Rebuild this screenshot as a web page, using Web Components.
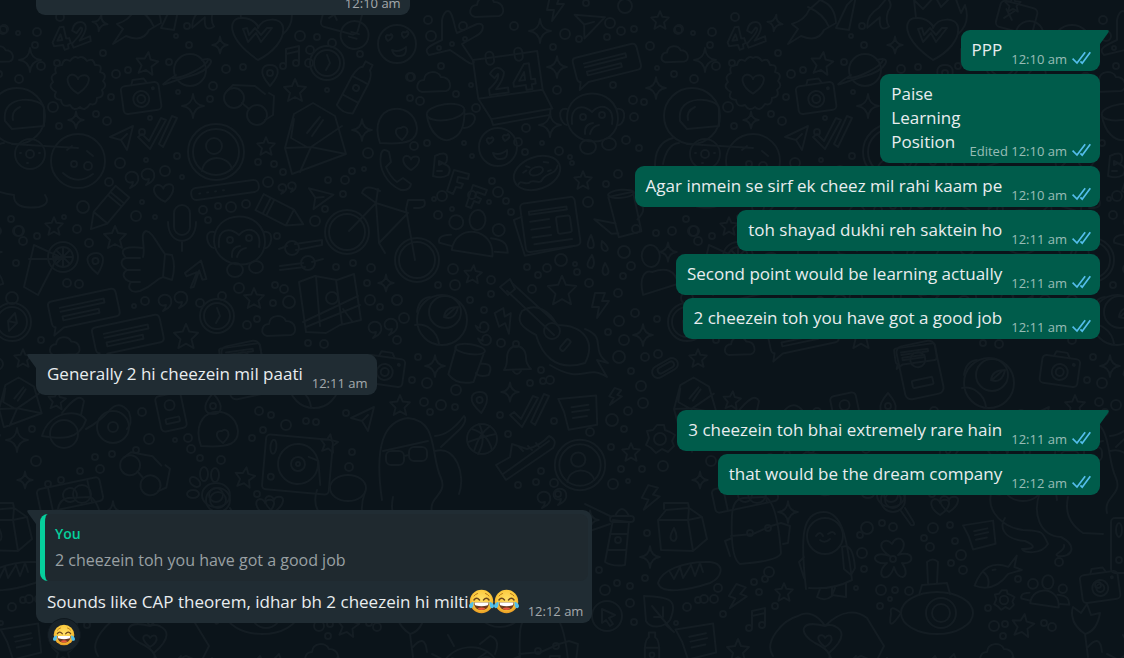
<!DOCTYPE html>
<html lang="en">
<head>
<meta charset="utf-8">
<meta name="viewport" content="width=device-width, initial-scale=1">
<title>Chat</title>
<style>
  html, body { height: 100%; margin: 0; }
  body { overflow: hidden; background: #0b141a; font-family: "Open Sans", "Noto Sans", sans-serif; color: #e9edef; }
</style>
</head>
<body>
<chat-thread>
  <chat-group>
    <chat-message side="in" time="12:10 am">Par kher iski to koi limit hi nahi h tbh</chat-message>
  </chat-group>
  <chat-group>
    <chat-message side="out" tail time="12:10 am">PPP</chat-message>
    <chat-message side="out" edited time="12:10 am">Paise<br>Learning<br>Position</chat-message>
    <chat-message side="out" time="12:10 am">Agar inmein se sirf ek cheez mil rahi kaam pe</chat-message>
    <chat-message side="out" time="12:11 am">toh shayad dukhi reh saktein ho</chat-message>
    <chat-message side="out" time="12:11 am">Second point would be learning actually</chat-message>
    <chat-message side="out" time="12:11 am">2 cheezein toh you have got a good job</chat-message>
  </chat-group>
  <chat-group>
    <chat-message side="in" tail time="12:11 am">Generally 2 hi cheezein mil paati</chat-message>
  </chat-group>
  <chat-group>
    <chat-message side="out" tail time="12:11 am">3 cheezein toh bhai extremely rare hain</chat-message>
    <chat-message side="out" time="12:12 am">that would be the dream company</chat-message>
  </chat-group>
  <chat-group>
    <chat-message side="in" tail time="12:12 am">
      <quoted-message slot="quote" author="You">2 cheezein toh you have got a good job</quoted-message>Sounds like CAP theorem, idhar bh 2 cheezein hi milti<joy-emoji></joy-emoji><joy-emoji></joy-emoji>
      <joy-emoji slot="reaction"></joy-emoji>
    </chat-message>
  </chat-group>
</chat-thread>

<script>
const define = (name, html, setup) => customElements.define(name, class extends HTMLElement {
  connectedCallback() {
    if (this.shadowRoot) return;
    const root = this.attachShadow({ mode: 'open' });
    root.innerHTML = html;
    if (setup) setup(this, root);
  }
});

/* Wallpaper: line doodles, centred on 0,0, repeated every 675px */
const shapes = {
  star: '<path d="M0-11 3-4 11-3 5 3 7 11 0 7-7 11-5 3-11-3-3-4Z"/>',
  spark: '<path d="M0-12Q1-1 11 0 1 1 0 12-1 1-11 0-1-1 0-12Z"/>',
  heart: '<path d="M0 8C-10 2-11-7-5-8-2-8 0-5 0-4 1-8 10-9 9-3 8 3 3 6 0 8Z"/>',
  bolt: '<path d="M-5-12H5L2-4H9L-3 13-1 2H-8Z"/>',
  cloud: '<path d="M-12 9C-20 7-17-3-10-3-9-13 4-13 7-6 17-6 19 6 12 8Z"/>',
  check: '<path d="M-20 3-16 0-9 7 3-16 8-14-8 15ZM1 10 14-18 19-16 5 13Z"/>',
  plane: '<path d="M-4-31C1-31 2-15 5-9L25-18C34-20 32-10 24-6L10 2 22 20C20 25 15 19-2 8L-23 13C-29 7-23 4-10-2L-10-22Q-8-31-4-31Z"/><circle cx="-13" cy="6" r="2"/><circle cx="0" cy="2" r="2"/><circle cx="13" cy="-3" r="2"/>',
  planet: '<circle r="16"/><path d="M-14 5C-40 22-22 12 0 6S28-15 12-10"/><path d="M-18 8C-8 9 16-3 18-10"/>',
  badge: '<path d="M0-26Q5-29 9-23 15-27 17-19 25-20 22-12 30-10 25-3 30 2 24 6 27 13 19 14 19 22 12 20 7 28 2 23-4 28-8 21-16 24-17 16-26 15-22 8-31 3-25-2-29-8-22-11-25-19-16-19-14-27-8-23-4-29 0-26Z"/>',
  camera: '<rect x="-19" y="-13" width="38" height="28" rx="4"/><path d="M-8-13-6-18H5L8-13"/><circle cy="2" r="8"/><circle cy="2" r="4"/><circle cx="13" cy="-7" r="1"/>',
  glasses: '<circle cx="-13" cy="-7" r="10"/><circle cx="10" cy="10" r="10"/><path d="M-5-2 2 4M-20-14-14-20 8-19 18-11M18 15 26 10 27-9 22-12"/>',
  envelope: '<path d="M-30 10-23 36 31 16 20-22-2-35-21-24ZM-30 10-4 9 27-12M-4 9-15 34M-4 9 31 16M-21-19-24 0-8 9M-8-5 5-21M-3-2 8-18"/>',
  avatar: '<circle r="28"/><circle r="23"/><circle cx="-2" cy="-6" r="8"/><path d="M-14 19C-12 2 12 2 16 17"/>',
  face: '<circle r="19"/><path d="M-9-3q-4-4-1-6 4 1 4-1 4 3-3 7ZM7-6q-4-4-1-6 4 1 4-1 4 3-3 7ZM-5 6Q2 9 9 3 10 12 3 12-3 13-5 6Z"/>',
  monkey: '<path d="M-25 2C-26-32 26-32 26 2 25 33-22 31-25 2Z"/><path d="M-25-8C-37-10-31 8-25 8M25-8C37-10 32 10 25 8M-20 7C-22-12-9-13 0-5 9-15 23-10 20 7M-7 17Q-8 7 1 6M-2 17Q0 9 7 8"/><circle cx="-9" cy="0" r="3"/><circle cx="10" cy="-2" r="3"/><ellipse cx="-4" cy="30" rx="8" ry="7"/><ellipse cx="17" cy="27" rx="7" ry="6"/>',
  bubble: '<path d="M-30-12H31Q35-12 35-7V11Q35 16 31 16H-23L-34 22-31 14Q-34 14-34 9V-8Q-34-12-30-12ZM-23-4H22M-23 0H22V-4M-22 5H15V9H-22Z"/>',
  note: '<path d="M-20-14 18-12 15 17-14 18-16 0ZM-8-4H9M-8 1H9M-8 7H6"/>',
  calendar: '<path d="M-35-25H30V14L37 34-25 36-35 14ZM-35 14H30M-25 36-24 42 34 40 35 34"/><rect x="-22" y="-31" width="8" height="13" rx="4"/><rect x="7" y="-31" width="8" height="13" rx="4"/><path d="M-20-9Q-12-19-6-9-6-3-16 7H-4V12H-23V6Q-11-2-12-8L-16-4ZM15-14H20V2H24V7H20V12H14V7H2V3ZM14-6 8 2H14Z"/>',
  four2: '<path d="M-9-11-18 3-17 7-8 7-7 12-3 11V7L0 6-1 1-4 1-5-11ZM-9-4-8 2-13 2ZM3-6Q6-15 14-13 22-8 9 5L20 2 20 7 2 11 1 7Q17-6 12-8L7-3Z"/>',
  cup: '<ellipse cy="-10" rx="19" ry="8"/><path d="M-19-10C-19 8-9 19 0 18 12 16 17 7 19-10M19-5C35-8 28 11 15 8"/>',
  bff: '<path d="M-20-26Q-7-32-8-23-8-19-11-18-2-15-7-7-13-3-22-6ZM-16-21V-17L-12-19ZM-18-11-13-11M-1-12 14-8 13-3 3-5 2 0 8 2 6 6 1 5-2 12-8 9ZM18 3 32 8 30 13 22 10 20 14 26 17 24 21 19 19 16 26 11 24Z"/>',
  donut: '<ellipse rx="24" ry="16"/><ellipse cy="-2" rx="7" ry="4"/><path d="M-22 5C-17-1-16 9-9 6-4 5-2 13 4 7 10 3 17 8 22 0M-13-5-9-6M-8-10-5-8M10-8 14-6M11 2H14"/>',
  bottle: '<path d="M-9-9Q-8-20-4-22V-28H4V-22Q8-20 9-9V24Q0 29-9 24ZM-9-9H9M-9 12H9"/><circle r="3"/>',
  watch: '<circle r="17"/><circle r="13"/><path d="M0-8 3 0-1 7"/><circle cx="-17" cy="-13" r="4"/><circle cx="5" cy="-20" r="4"/>',
  pin: '<path d="M0 10C-14-6-6-11 0-11S14-6 0 10Z"/><circle cy="-3" r="3"/>',
  tune: '<path d="M-5 8V-9L8-12V5M-5-4 8-7"/><circle cx="-8" cy="8" r="3"/><circle cx="5" cy="5" r="3"/>',
  arrow: '<path d="M11-11-12 0-1 3 5 13ZM-1 3 5-3"/>',
  phone: '<path d="M-14-16Q-12-23-6-18L-4-8-9-3Q-5 7 2 12L8 8 16 14Q15 21 6 20C-8 14-17-1-14-16Z"/>',
  quotes: '<path d="M-8-8C-16-5-12 5-5 2Q-5 5-8 8 2 4 0-4-2-9-8-8ZM8-11C0-8 4 2 11-1Q11 2 8 5 18 1 16-7 14-12 8-11Z"/>',
  bar: '<rect x="-34" y="-6" width="68" height="12" rx="5"/><path d="M-26 0h1M-18 0h1M-10 0h1M-2 0h1"/>',
  crayon: '<path d="M-24-9H10L25 0 10 9H-24ZM-16-9V9M-12-9V9M10-9V9"/>',
  mic: '<rect x="-8" y="-22" width="16" height="30" rx="8"/><path d="M-14-5C-14 20 14 20 14-5M0 14V24"/>',
  thumb: '<path d="M-5-5C-2-16-9-28-2-31 5-30 9-18 17-8L15 15C6 18 8 22-8 29-18 32-21 25-17 20-26 17-26 11-21 8-29 3-27-3-22-4-31-14-20-16-5-14M-22-4H-8M-21 8H-8M-17 20H-8M17-8 24-7Q28 4 24 18L15 15"/>',
  drink: '<path d="M-9-26-19 16-5 24 15-15ZM-14-12H17"/><circle cx="20" cy="-14" r="15"/><circle cx="20" cy="-14" r="10"/><path d="M20-24V-4M10-14H30M13-21 27-7M13-7 27-21"/>',
  uparrow: '<path d="M-3 16 2 0-8 5-10 2 5-12 12 6 8 7 4-2 0 15Z"/>',
  sliders: '<path d="M-21-7-13-10M-5-12 22-16V-11L-4-6M-20 10 3 7M12 6 23 3M-20 14 5 11"/><circle cx="-8" cy="-8" r="7"/><circle cx="8" cy="7" r="7"/>',
  bike: '<circle cx="-33" cy="1" r="22"/><circle cx="-33" cy="1" r="18"/><circle cx="37" cy="29" r="22"/><circle cx="37" cy="29" r="18"/><path d="M-31 0-4-28 28-18-1 12-4-28-2-42M-4-28-18-38Q-15-48 0-40M-1 12 5 22M35 29 26-22 28-31H44Q48-22 34-23"/>',
  map: '<path d="M-31-22-15-28 7-24 24-30 31 16 10 21-4 29-24 28ZM-14-28-10 22M6-24 12 20M-27 18 28-8M-24 23 30 1M13 5 22 17"/><circle cx="2" cy="-6" r="6"/>',
  compass: '<circle r="19"/><circle r="15"/><circle cy="-24" r="6"/><path d="M3-9-4-1-3 9 5 1ZM-4-1 5 1"/>',
  scooter: '<path d="M-42 12C-35-13-5-16 2-4-5 17-24 15-42 12ZM-22-11Q-5-33 0-23L-3-9M2 5Q15-2 25-13 35-25 45-12 49 0 43 5"/><circle cx="-20" cy="10" r="14"/><circle cx="29" cy="3" r="16"/><circle cx="29" cy="3" r="5"/>',
  card: '<rect x="-13" y="-18" width="26" height="36" rx="4"/><circle cy="-7" r="5"/><rect x="-7" y="6" width="14" height="5" rx="1"/>',
  cat: '<path d="M-17 15C-31-25 17-30 20 0 20 12 13 17-17 15Z"/><path d="M5 12C-5 5-1-1 4 0 9-4 15 3 5 12Z"/>',
  deck: '<rect x="-34" y="-27" width="67" height="55" rx="4"/><circle r="20"/><circle r="7"/><circle r="2"/><path d="M10-8 20-5 24 19"/><ellipse cx="-26" cy="-15" rx="3" ry="7"/><circle cx="-26" cy="15" r="3"/>',
  paw: '<ellipse cx="8" cy="8" rx="14" ry="12"/><circle cx="8" cy="8" r="7"/><ellipse cx="-15" cy="7" rx="6" ry="4"/><ellipse cx="-13" cy="-5" rx="4" ry="6" transform="rotate(-50-13-5)"/><ellipse cx="-4" cy="-13" rx="4" ry="7"/><ellipse cx="7" cy="-12" rx="4" ry="7"/>',
  ticket: '<rect x="-32" y="-12" width="64" height="24" rx="4"/><path d="M-20-12V12M20-12V12"/><circle r="7"/>',
  people: '<ellipse cy="-17" rx="8" ry="10"/><path d="M-23 15C-22-12 18-12 18 18ZM-25 0C-38 1-37 7-36 9L-24 11M15 0C31 0 32 7 33 13H20"/><circle cx="-21" cy="-13" r="7"/><circle cx="22" cy="-9" r="6"/>',
  news: '<rect x="-27" y="-26" width="55" height="49" rx="4"/><path d="M-27-13-35-11-29 26 22 23M-19-17H19V-14H-19ZM-19-7H0M-19 1H0M-19 9H0M-18 16H20"/><rect x="7" y="-8" width="14" height="17" rx="2"/>',
  can: '<path d="M-10-20-3 21 20 17 15-23ZM-5 7-26 1-10 17-3 17M16-13Q31-7 17 5"/><ellipse cx="3" cy="-22" rx="13" ry="4"/>',
  drops: '<path d="M-6-15Q-13-1-5-2-1-3-6-15ZM5-9Q3 1 9 1 14-1 5-9ZM-5 5Q-14 18-5 18-1 14-5 5ZM8 13Q3 23 8 25 15 24 8 13Z"/>',
  guitar: '<path d="M-46-52 0-10M-51-44-4 0M-36-24C-22-33-8-24-1-10 26-10 38 7 27 28-4 38-17 17-22 0-37-8-42-14-36-24ZM27-6C50 3 31 14 50 28L39 25 49 42C27 28 26 51-8 30"/><circle cx="-6" cy="-4" r="8"/><rect x="5" y="4" width="5" height="13" rx="2" transform="rotate(40 8 10)"/><path d="M-48-56-58-48-50-40-43-46Z"/>',
  egg: '<circle r="25"/><circle cx="3" cy="-8" r="16"/><path d="M-25-8Q-23-22-12-23M-27 5C-17 3-5 10-3 24M2-3Q3-13 16-13 13 1 2-3ZM4-4 13-12"/>',
  mug: '<path d="M-14-16-18 13Q-8 23 8 17L14-12M13-2Q26-5 22 8 14 12 9 8"/><ellipse cy="-15" rx="15" ry="5"/>',
  bell: '<path d="M-12 10Q-9 6-9-2C-9-18 10-18 10-2Q10 4 15 9ZM-3 11Q1 17 5 11"/><circle cy="-16" r="3"/>',
  person: '<ellipse cy="-14" rx="9" ry="11"/><path d="M-11 24C-14 6-7-1 0 2 14-2 23 2 25 16Z"/>',
  clip: '<rect x="-14" y="-6" width="28" height="12" rx="6"/><rect x="-8" y="-3" width="18" height="6" rx="3"/>',
  ball: '<circle r="15"/><path d="M-10-10Q6-5 10 11M-14 3Q3-3 14-5M-3-15Q5 0-4 15M-8 12Q-3-5 8-13"/>',
  shoe: '<path d="M-28 5-14-3-12-16 3-11Q16-14 25-24 34-20 29-12L-18 20ZM-21 14 25-19M-5-13-1-9M4-14 8-10M12-17 15-13"/>',
  gear: '<path d="M-3-14 4-14 5-9 10-7 15-4 12 2 14 7 8 13 2 10-4 14-9 9-14 6-11-1-13-8-7-9Z"/><circle r="6"/>',
  monster: '<path d="M-26 45C-34-10-24-34 0-37 31-34 22 0 33 23 40 40 20 41 24 58M27-19Q42-20 56-39 60-35 52-26L33-8M27-4C48-10 58 20 51 39"/><rect x="-22" y="-4" width="18" height="14" rx="5"/><rect x="1" y="-8" width="18" height="14" rx="5"/><path d="M-25-4 20-14M-4 1 1 0"/>',
  tower: '<path d="M-9-22-17 20Q-9 25 3 23L7-20ZM-12-8H5M-14 8H4"/><rect x="-12" y="-26" width="24" height="6" rx="3"/><path d="M-7-26Q0-40 7-26M-12-26-37-38M-12-18-38-9"/><circle cy="-2" cx="-4" r="3"/>',
  carton: '<path d="M-22-11-19 19 13 20 27 8 22-14 9-23-14-21ZM-22-11H8L13 20M8-11 9-23M8-11 22-14M-16-22V-28H8L9-23"/><path d="M-6-3Q-13 9-6 10-1 8-6-3Z"/>',
  bread: '<path d="M-30 8C-27-4-5-14 22-13 39-11 33 3 22 8 1 15-27 20-30 8ZM-18-3-14 4-8-8-5 3 3-10 7 1 12-12 15-3"/>',
  bag: '<path d="M-25-20Q-24-36-14-37L8-38Q20-34 24 18 22 26-17 29-27 23-25-20ZM-26 1-4-1 14-9 24-12M-25 3-32 6-27 21M24-12 33-9 31 8 26 9"/><circle cy="-41" r="9"/><circle cx="-7" cy="-2" r="3"/><circle cx="11" cy="-7" r="3"/>',
  astro: '<path d="M-22 34C-28-20-26-43-4-43 14-43 19-17 24 25Q5 35-19 33M-24 2-29 7-24 23M14-8Q25-13 27 13L23 20 16 14ZM-8 34-11 42Q-3 47 4 41V33M7 33 4 40 18 42V28"/><circle cx="-3" cy="-19" r="18"/><path d="M-12-19Q-8-25-5-19M0-21Q5-25 7-21M-8-15Q-3-11 2-16"/>',
  lens: '<circle r="12"/><circle r="8"/><path d="M8 11 18 25Q23 26 20 21L12 8"/>',
  flower: '<path d="M-3-3C-20-13-8-24-1-15 4-27 19-17 5-4 21-10 23 6 9 4 19 18 6 25 1 8-5 27-20 16-6 4-23 6-22-10-3-3Z"/><circle r="3"/>',
  fish: '<path d="M-20 10Q-6-16 16-4L26-14 22-3 29 1 15 3Q-2 20-20 10ZM-10-3Q-3 4-7 13M0-3H3"/>',
  sub: '<ellipse cy="8" rx="36" ry="21"/><circle cx="4" cy="8" r="15"/><circle cx="4" cy="8" r="9"/><path d="M-18-10-15-20 10-22 13-11M-9-22-10-43Q-4-48 1-43L0-22M-36 8Q-48-2-46 9-50 29-36 8"/>',
  hands: '<path d="M-52 34C-62 20-42-2-27-6-18-12-7-7 0 4-27-3-26 12-10 21 7 29 8 38-1 39H-38M0 4C17-13 32-12 42-4L59 24 51 40 36 34 19 41Q6 41 4 31 21 16 15 8 8 1 0 4"/><path d="M0 25C-14 14-2 10 0 16 5 9 12 18 0 25Z"/>',
  leaf: '<path d="M-14-16C11-15 21-13 12 8 6 16-8 17-12 9ZM-6-6 13 17M-4 5H5V-5M8 13 16 20"/>',
  tulip: '<path d="M0 10C-18-2-12-17-12-17L-4-11 2-20 6-9 15-11Q12 7 0 10ZM0 10 3 33M2 24Q15 8 17 28"/>',
  rocket: '<path d="M-22 19-12 4-18-1Q-5-5-1-15L10-25Q25-20 26-2L14 5Q8 18-9 11ZM-2-18Q14-11 19 2M26 3 37-20 46-29 39 5Z"/>',
  heartbadge: '<path d="M0 26C-32 4-30-16-17-16-6-17 1-8 0-6 5-17 23-17 25-7 27 6 14 19 0 26ZM-17-16-19-34-10-25 2-38 8-27 21-40 28-21 32-29Q38-11 25 0M-15-5-10 8-2-1 3 8 14-6 9-6 3 1-3-6-9 1-11-6Z"/>',
  dice: '<rect x="-19" y="-16" width="38" height="27" rx="5"/><circle cx="17" cy="11" r="14"/><path d="M13 9H21M12 14H20M-12-8-4 1M-4-8-12 1"/>',
  helmet: '<circle r="28"/><path d="M-12 5C-16-24 26-18 27-8V10L-5 13ZM-4 4Q-6-5 3-9M-19 22Q-38 27-37 52M-13 27Q-25 28-29 48M-5 28 61 32"/><circle cx="13" cy="38" r="15"/><circle cx="13" cy="38" r="4"/><path d="M3 37H4M22 37H23M10 29H11M10 47H11M-37 52Q-42 73-3 79-4 94 22 91 34 88 28 79"/>',
  cookie: '<circle r="27"/><path d="M-15 12Q-1 25 15 13M-11-11-6-15M9-10 15-5"/><circle cx="10" cy="5" r="4"/><circle cx="-4" cy="3" r="3"/>',
  tusk: '<path d="M0-20Q13-17 11-4 14 10 23 14 15 30 5 9L-3 31Q-13 17-3-2Z"/>',
  sloth: '<path d="M-31-30C-39-7-17 8 0 10 18 11 19 10 25 24 18 35 0 33-1 29 13 29 13 26 2 21-22 19-23 5-18-2M17-28C9-6 17 16 38 17 55 26 49 38 35 36 29 34 43 31 41 25M45-23Q40 0 60 13L80 14"/><ellipse cx="0" cy="-32" rx="18" ry="13"/>',
  turtle: '<path d="M-30 20C-27-12 21-17 29 14ZM-18 4 0 10 17-2M-28 5-38 0M10-10 20-18Q31-15 25 0M-16-8-22-19"/>',
  cursor: '<circle r="15"/><path d="M-5-7 8-1 2 2 6 8 3 10-1 4-5 7Z"/>'
};
const placed = `star 147 63 8|star 295 90 0|star 266 146 0 .8|star 54 226 0 .8|star 115 237 0|star 254 298 0 .9|star 186 336 0 1.1|star 245 477 9 .9|star 23 358 0 .8|star 57 400 6 .8|star 660 20 0 .8|star 583 180 0 .8|star 473 274 5 .8|star 562 290 0 1.3|star 400 405 0 .9|star 631 452 0 .8|star 109 592 0 .8|star 63 650 0|star 348 625 9|star 329 443 9 .8|star 338 4 0 .7
spark 30 60|spark 100 23 9 .7|spark 220 45 0 .7|spark 193 106|spark 362 130 0 .9|spark 76 120 0 .7|spark 386 283 0 .7|spark 17 440 0|spark 25 480 0 .7|spark 540 31|spark 557 67 0 .9|spark 550 125|spark 656 88 0 .9|spark 435 366 0 .9|spark 510 392 0 .8|spark 643 335 0 .9|spark 113 512 0 .9|spark 650 557 0 .9|spark 668 252 0 .8
four2 70 37 -8|rocket 135 25|tusk 205 10 30 .7|heartbadge 258 34|dice 341 20 15|face 397 44|planet 190 70|tune 291 58|watch 327 63|pin 270 76|bottle 356 88 28|glasses 247 105|badge 78 84|heart 78 84 0 1.2|camera 141 97 -8|helmet 17 116|envelope 315 138|cat 397 128|cookie 78 161|arrow 122 137|check 158 134|avatar 216 152|phone 395 170|quotes 138 180|heart 164 193 -8 1.1|bar 225 190 -8|quotes 286 189 0 .6|arrow 318 196 40|heart 411 163 0 .9
crayon 107 210 130|mic 182 227|thumb 148 262|drink 43 271|pin 96 264 -10|uparrow 195 272 5|monkey 239 240|crayon 281 213 27|sliders 300 256|bike 380 231|bubble 83 307 -12|bubble 127 333 -12|watch 217 316|quotes 171 303|cloud 279 327|map 330 304|quotes 381 330|compass 12 322|bubble 240 353 -8 .6
envelope 20 402 0 .7|scooter 84 424|card 171 412 -12|cat 218 431|deck 298 464 5|glasses 142 474 8|paw 208 487|arrow 363 418|ticket 70 495 -12|cloud 65 347 0 .9|egg 314 383 0|pin 213 403 180|heart 274 504
plane 452 42|cloud 487 8|bolt 555 8|arrow 587 22 30 1.2|bubble 606 62 -14 .95|cloud 675 55 0 .8|cloud 434 83|calendar 511 80 -8|monkey 592 117|cup 447 122 -8|face 498 147|bff 455 182|donut 537 173 -20
people 476 237 5|news 550 226 -8|can 620 216 -5|drops 597 250|guitar 558 335|bolt 505 321 -30|bolt 600 305|egg 442 320|quotes 482 332 90 .8|mug 468 364 8|bell 516 360|person 652 270 -5|clip 665 368 -30|pin 480 403 -8|check 530 412|note 580 410 -8|bolt 615 397 20 .7|ball 482 439|shoe 524 460|avatar 580 465 0 .9|gear 660 439|monster 408 455|camera 385 370 8|card 245 370 -12 1.5
tower 622 542|bolt 650 498 15|carton 680 531|bread 688 575|bag 82 535|astro 153 555|lens 218 500|flower 218 559|heart 265 507|note 306 533 -12 .8|fish 318 573 -8|sub 262 605|hands 150 622|gear 329 600 0 .7|people 372 594 4 .7|cursor 607 616|leaf 658 612|bolt 62 597 20|tune 82 620|note 698 639 -12|tulip 410 624|camera 425 586 -8|sloth 348 520|bottle 652 655 0 .8|cloud 322 655|turtle 470 654|cookie 500 600|bag 545 653|quotes 550 500|deck 470 545|phone 530 550|star 570 585|spark 590 520 0 .8`;
const dots = '4 29 4,18 33 2,37 32 4,35 45 3,41 66 4,19 79 4,57 63 3,60 17 4,187 26 3,176 36 2,189 45 3,103 53 3,116 74 4,128 70 3,111 97 3,169 62 3,226 69 4,243 67 3,213 86 4,178 92 2,210 99 3,53 107 5,96 114 3,107 121 4,59 126 3,150 118 2,142 132 3,120 163 5,177 156 3,146 160 2,109 182 4,165 171 5,182 177 2,258 162 3,274 164 3,300 36 5,317 37 3,360 54 3,309 63 4,327 90 2,410 77 4,368 153 5,352 171 3,364 169 2,345 180 4,328 180 3,268 182 5,283 172 3,83 207 6,136 216 5,142 202 2,203 210 4,218 206 3,231 207 5,246 204 4,208 220 3,155 217 2,315 221 5,325 209 3,343 194 3,18 231 5,23 241 4,37 236 3,11 219 3,77 229 4,64 217 2,89 243 4,67 283 4,79 284 4,16 263 3,277 236 3,336 267 3,353 263 3,371 268 4,367 283 3,239 288 5,275 285 3,284 289 4,289 302 6,273 303 3,145 301 4,134 306 2,247 325 4,257 319 3,308 343 3,324 344 4,370 300 5,380 307 3,397 300 5,41 340 3,32 429 3,36 461 5,48 484 3,61 480 3,80 471 3,95 457 3,100 469 4,112 454 3,136 450 3,142 412 4,149 439 5,175 440 2,188 438 4,191 449 4,200 458 3,221 460 4,252 438 3,259 411 4,271 415 3,286 425 5,306 421 3,316 422 3,346 413 3,263 430 3,352 452 3,349 467 4,257 494 3,428 20 4,431 36 5,463 26 4,514 26 4,565 34 5,553 47 3,579 39 3,610 23 5,621 31 4,634 29 3,607 37 3,625 6 7,650 46 4,678 30 4,657 68 2,674 74 3,411 77 4,441 66 3,471 85 2,456 94 3,410 98 3,420 101 4,476 108 4,557 90 4,613 85 3,633 100 4,644 102 3,634 117 4,526 128 4,559 151 4,572 163 2,626 140 4,639 148 3,518 142 4,525 152 3,542 143 2,464 143 2,414 146 4,427 143 3,472 156 2,586 3 3,570 157 2,618 174 4,606 184 3,442 196 5,492 181 3,498 192 5,472 195 4,434 199 2,489 202 2,452 209 2,438 215 4,511 212 3,506 201 3,588 202 5,453 269 5,438 285 3,455 285 5,491 280 4,491 294 3,532 289 4,527 267 3,538 275 3,547 268 4,561 260 6,575 264 2,589 283 4,577 272 3,624 252 6,631 266 4,623 276 3,618 293 4,636 229 4,656 233 3,672 231 4,694 231 5,635 313 4,619 321 5,657 319 3,608 332 3,624 340 5,619 357 6,645 357 4,658 354 4,631 371 3,641 386 5,643 403 5,628 411 4,612 420 6,624 429 3,590 432 4,611 447 3,621 469 3,642 469 3,663 466 5,613 484 5,628 481 2,530 383 3,543 381 3,550 380 4,541 370 3,501 343 4,456 390 5,427 383 5,418 357 3,412 380 3,397 300 5,404 318 5,470 300 3,484 310 3,397 340 4,424 402 4,441 405 5,455 407 3,430 412 3,500 415 3,554 421 3,508 434 3,541 471 3,554 483 4,518 485 3,536 482 3,558 494 3,647 533 3,599 570 3,645 578 3,605 590 5,617 583 3,630 586 3,630 603 4,634 622 3,676 623 2,698 600 3,704 599 4,714 599 4,718 588 4,687 607 4,723 614 3,754 582 3,765 579 3,769 572 5,759 592 3,775 606 3,860 535 3,867 528 6,862 553 5,864 569 3,856 588 2,882 523 3,893 527 4,924 538 3,930 547 4,933 528 5,950 525 3,955 541 3,961 555 5,951 563 3,963 570 4,881 590 5,895 590 3,909 591 4,890 599 2,880 606 3,988 608 3,994 626 5,1005 624 3,1003 636 3,1044 623 3,1052 627 4,1018 579 3,1059 562 4,1098 585 3';
define('doodle-wallpaper', `
<style>
  :host { position: fixed; inset: 0; z-index: -1; overflow: hidden; background: #0b141a; }
  svg { display: block; width: 100%; height: 100%; fill: none; stroke: #141d23; stroke-width: 2; stroke-linecap: round; stroke-linejoin: round; }
</style>
<svg aria-hidden="true"><defs><g id="tile"></g></defs></svg>`, (host, root) => {
  const doodles = placed.split(/[|\n]/).map(s => {
    const [name, x, y, turn = 0, size = 1] = s.trim().split(' ');
    return `<g transform="translate(${x} ${y}) rotate(${turn}) scale(${size})" stroke-width="${2 / size}">${shapes[name]}</g>`;
  }).join('');
  const rings = dots.split(',').map(s => {
    const [x, y, r] = s.split(' ').map(Number);
    return `<circle cx="${x > 675 ? x - 675 : x}" cy="${y}" r="${r}"/>`;
  }).join('');
  root.querySelector('#tile').innerHTML = doodles + rings;
  const svg = root.querySelector('svg');
  let copies = '';
  for (let y = 0; y < 2; y++) for (let x = -1; x < 4; x++) copies += `<use href="#tile" x="${x * 675}" y="${y * 660}"/>`;
  svg.insertAdjacentHTML('beforeend', copies);
});

define('joy-emoji', `
<style>
  :host { display: inline-block; width: 25px; height: 25px; vertical-align: -6px; }
  svg { display: block; width: 100%; height: 100%; }
</style>
<svg viewBox="0 0 50 50" role="img" aria-label="face with tears of joy">
  <defs><radialGradient id="skin" cx=".5" cy=".4" r=".6"><stop offset="0" stop-color="#ffe067"/><stop offset=".65" stop-color="#fbc93d"/><stop offset="1" stop-color="#e99b23"/></radialGradient></defs>
  <circle cx="25" cy="25" r="23.5" fill="url(#skin)"/>
  <path d="M10 14q3-4 7-5M40 14q-3-4-7-5" fill="none" stroke="#b97818" stroke-width="2" stroke-linecap="round"/>
  <path d="M10 22q5-7 11 0M29 22q6-7 11 0" fill="none" stroke="#6b451c" stroke-width="3" stroke-linecap="round"/>
  <path d="M10 27h30c0 10-6 15-15 15S10 37 10 27Z" fill="#6c3a1e"/>
  <path d="M11 27h28c0 4-1 6-3 6-7 2-15 2-22 0-2 0-3-2-3-6Z" fill="#fff"/>
  <path d="M17 39q8-4 16 0-4 3-8 3t-8-3Z" fill="#e8573d"/>
  <path d="M9 26C5 26 0 30 0 34c0 5 6 6 8 1 1-3 1-6 1-9ZM41 26c4 0 9 4 9 8 0 5-6 6-8 1-1-3-1-6-1-9Z" fill="#52c0ea"/>
</svg>`);

define('read-ticks', `
<style>:host { display: block; width: 19px; height: 14px; } svg { display: block; width: 100%; height: 100%; }</style>
<svg viewBox="0 0 19 14" role="img" aria-label="Read" fill="none" stroke="#53bdeb" stroke-width="1.7"><path d="M.6 7.6 5 12 13.2 1.2M8.4 10.4 10.2 12.2 18.3 1.2"/></svg>`);

define('quoted-message', `
<style>
  :host { display: block; border-left: 5px solid #06cf9c; border-radius: 8px; background: #1f292f; padding: 8px 10px 7px; }
  strong { display: block; font-size: 14px; line-height: 24px; font-weight: 600; color: #06cf9c; }
  span { display: block; font-size: 16px; line-height: 28px; color: #99a0a3; }
</style>
<strong></strong><span><slot></slot></span>`, (host, root) => {
  root.querySelector('strong').textContent = host.getAttribute('author');
});

define('chat-message', `
<style>
  :host { display: block; position: relative; max-width: 65%; border-radius: 9px; background: #202c33; --tail: #202c33; }
  :host([side="out"]) { align-self: flex-end; background: #005c4b; --tail: #005c4b; }
  :host([side="out"][tail]) { border-top-right-radius: 0; }
  :host([side="in"][tail]) { border-top-left-radius: 0; }
  .tail { display: none; position: absolute; top: 0; width: 9px; height: 14px; fill: var(--tail); }
  :host([tail]) .tail { display: block; }
  :host([side="out"]) .tail { left: 100%; }
  :host([side="in"]) .tail { right: 100%; transform: scaleX(-1); }
  .quote::slotted(*) { margin: 4px 4px 0; }
  .row { display: flex; align-items: flex-end; justify-content: space-between; gap: 9px; padding: 8px 9px 9px 11px; }
  p { margin: 0; font-size: 17px; line-height: 24px; }
  .meta { display: flex; gap: 5px; font-size: 13px; line-height: 16px; margin-bottom: -5px; white-space: nowrap; color: rgba(255,255,255,.6); }
  .reaction { display: none; position: absolute; top: 100%; left: 11px; margin-top: -5px; padding: 5px; border-radius: 18px; background: #182229; border: 1px solid #10191f; }
  .reaction ::slotted(*) { width: 22px; height: 22px; display: block; }
  .reaction.on { display: block; }
</style>
<svg class="tail" viewBox="0 0 9 14" aria-hidden="true"><path d="M0 0H7Q10 0 8 3L0 14Z"/></svg>
<slot name="quote" class="quote"></slot>
<div class="row"><p><slot></slot></p><div class="meta"><span></span></div></div>
<div class="reaction"><slot name="reaction"></slot></div>`, (host, root) => {
  const meta = root.querySelector('.meta');
  meta.firstElementChild.textContent = (host.hasAttribute('edited') ? 'Edited ' : '') + host.getAttribute('time');
  if (host.getAttribute('side') === 'out') meta.append(document.createElement('read-ticks'));
  root.querySelector('.reaction').classList.toggle('on', !!host.querySelector('[slot="reaction"]'));
});

define('chat-group', `
<style>:host { display: flex; flex-direction: column; align-items: flex-start; gap: 3px; }</style><slot></slot>`);

define('chat-thread', `
<style>
  :host { display: flex; flex-direction: column; justify-content: flex-end; gap: 15px; box-sizing: border-box; height: 100%; padding: 0 24px 35px 36px; position: relative; z-index: 0; }
</style>
<doodle-wallpaper></doodle-wallpaper><slot></slot>`);
</script>
</body>
</html>
